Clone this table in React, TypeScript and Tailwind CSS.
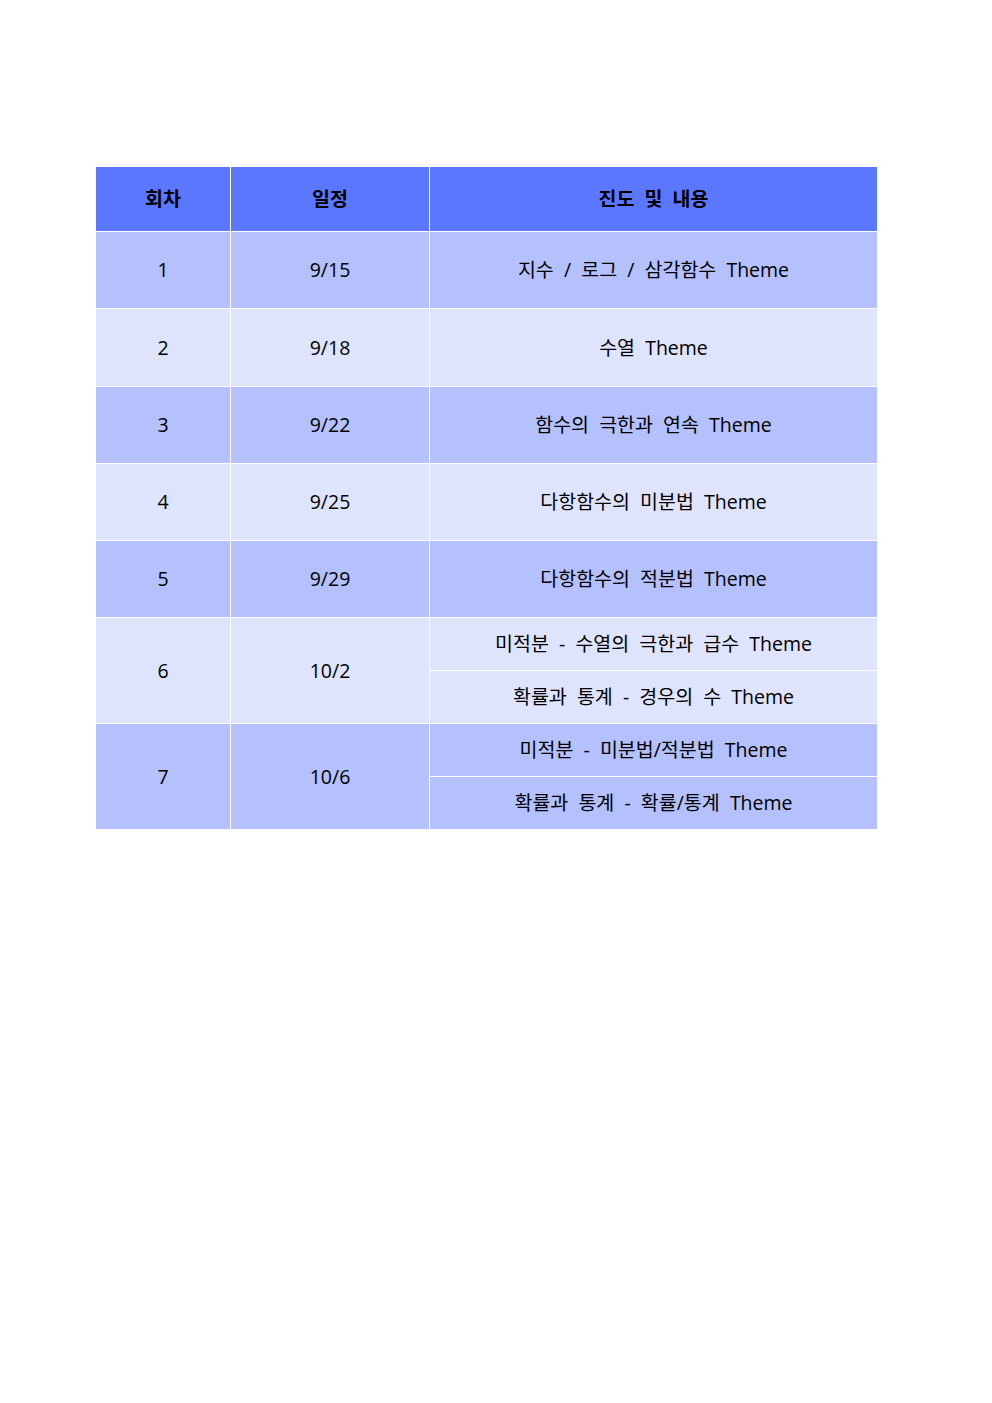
import React from "react";

const font = { fontFamily: '"Open Sans", "Noto Sans CJK KR", sans-serif' };

type Row = { n: string; d: string; items: string[]; dark: boolean };

const rows: Row[] = [
  { n: "1", d: "9/15", items: ["지수  /  로그  /  삼각함수  Theme"], dark: true },
  { n: "2", d: "9/18", items: ["수열  Theme"], dark: false },
  { n: "3", d: "9/22", items: ["함수의  극한과  연속  Theme"], dark: true },
  { n: "4", d: "9/25", items: ["다항함수의  미분법  Theme"], dark: false },
  { n: "5", d: "9/29", items: ["다항함수의  적분법  Theme"], dark: true },
  { n: "6", d: "10/2", items: ["미적분  -  수열의  극한과  급수  Theme", "확률과  통계  -  경우의  수  Theme"], dark: false },
  { n: "7", d: "10/6", items: ["미적분  -  미분법/적분법  Theme", "확률과  통계  -  확률/통계  Theme"], dark: true },
];

const heights = ["h-[76px]", "h-[77px]", "h-[76px]", "h-[76px]", "h-[76px]"];

export default function App() {
  return (
    <div className="w-[992px] h-[1403px] bg-white" style={font}>
      <div className="pt-[167px] pl-[96px]">
        <div className="flex flex-col gap-px bg-white w-[781px] text-[19.5px] font-normal text-black">
          <div className="flex gap-px h-[64px] bg-white font-bold">
            <div className="w-[134px] bg-[#5b77fe] flex items-center justify-center">회차</div>
            <div className="w-[198px] bg-[#5b77fe] flex items-center justify-center">일정</div>
            <div className="w-[447px] bg-[#5b77fe] flex items-center justify-center whitespace-pre">진도  및  내용</div>
          </div>
          {rows.map((r, i) => {
            const bg = r.dark ? "bg-[#b4c1fc]" : "bg-[#dfe4fd]";
            const multi = r.items.length > 1;
            const h = multi ? "h-[105px]" : heights[i];
            return (
              <div key={r.n} className={`flex gap-px ${h}`}>
                <div className={`w-[134px] ${bg} flex items-center justify-center`}>{r.n}</div>
                <div className={`w-[198px] ${bg} flex items-center justify-center`}>{r.d}</div>
                <div className="w-[447px] flex flex-col gap-px">
                  {r.items.map((t) => (
                    <div key={t} className={`flex-1 ${bg} flex items-center justify-center whitespace-pre`}>
                      {t}
                    </div>
                  ))}
                </div>
              </div>
            );
          })}
        </div>
      </div>
    </div>
  );
}
